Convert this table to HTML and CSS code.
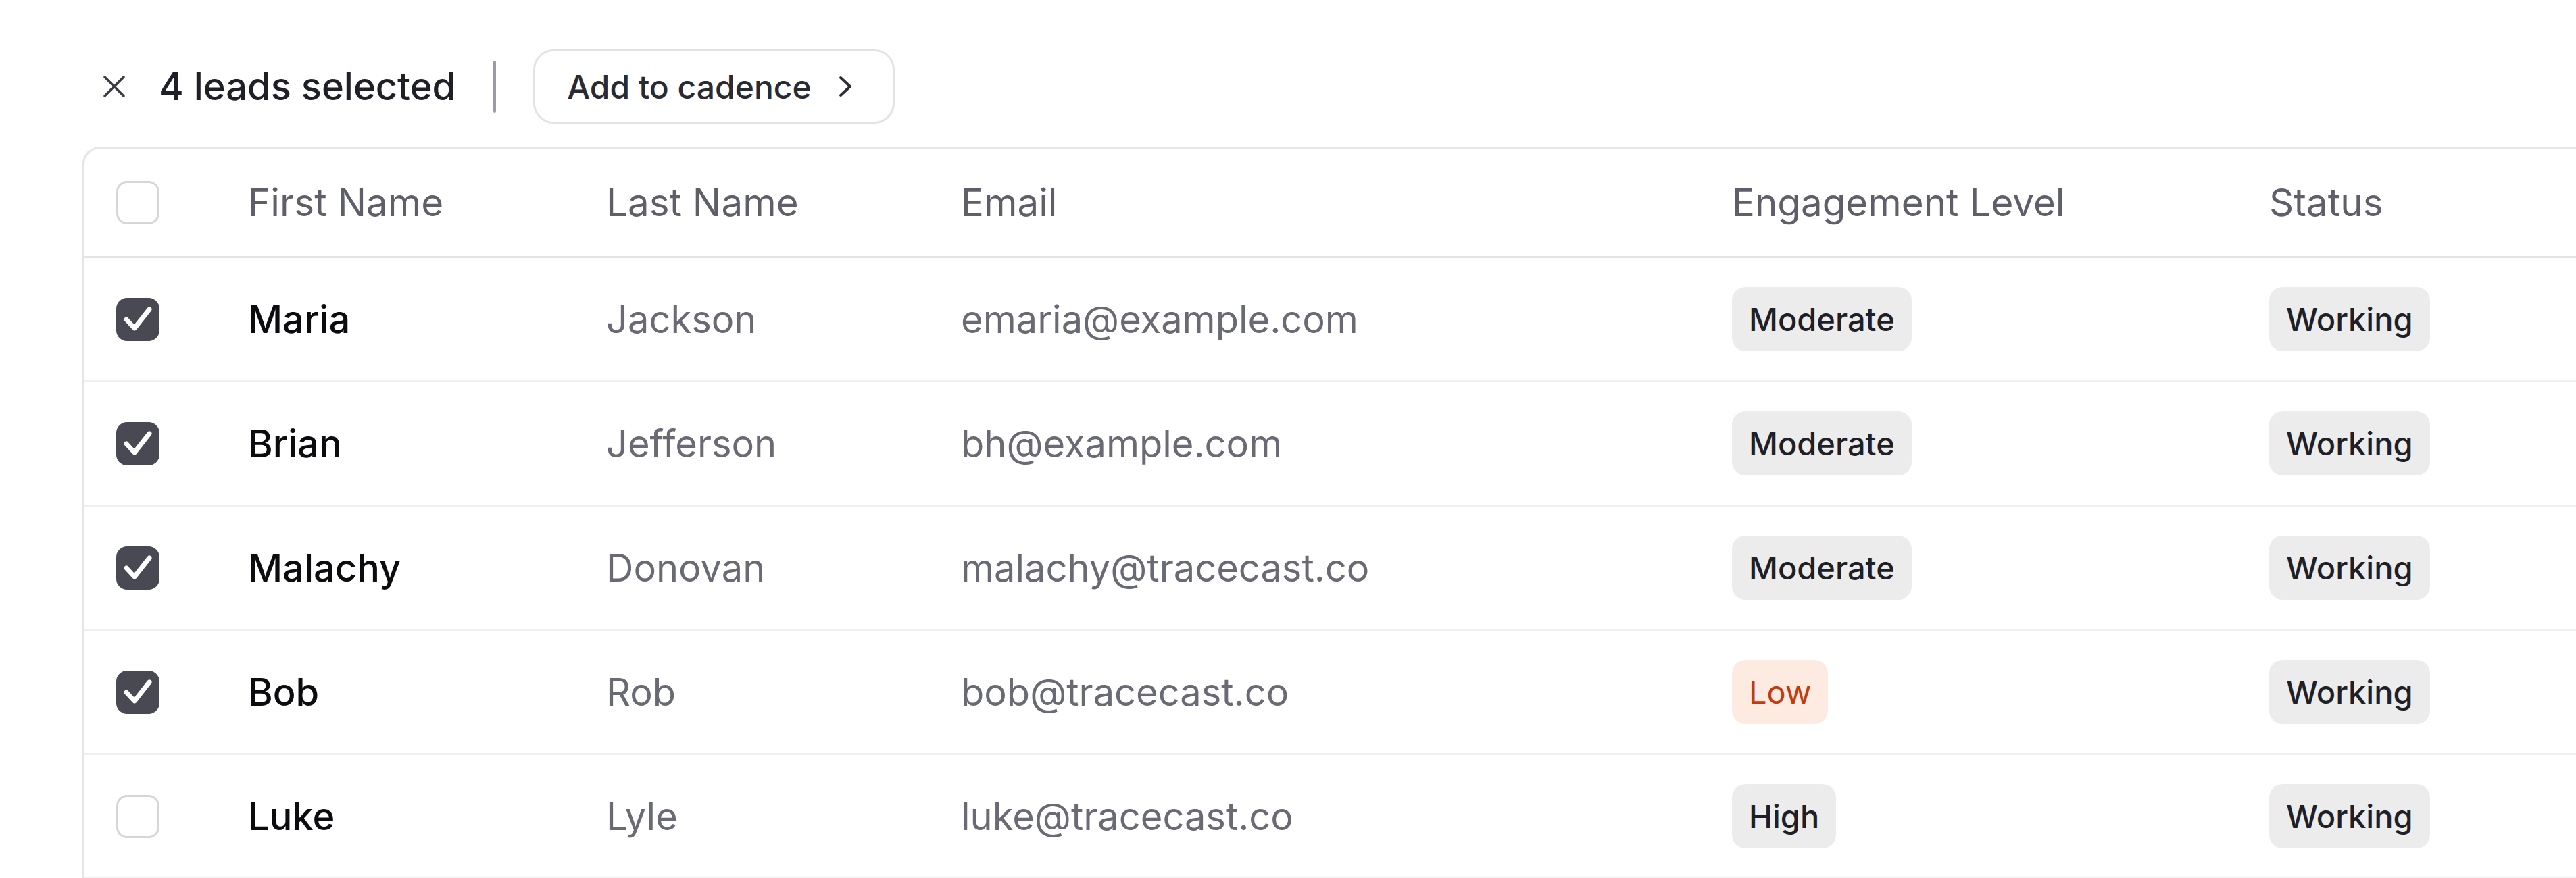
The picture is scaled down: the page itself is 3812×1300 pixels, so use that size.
FILE: index.html
```html
<!DOCTYPE html>
<html>
<head>
<meta charset="utf-8">
<link rel="stylesheet" href="styles.css">
</head>
<body>
<div class="page">
  <div class="toolbar">
    <span class="close-icon">
      <svg width="34" height="34" viewBox="0 0 34 34"><path d="M3 3 L31 31 M31 3 L3 31" stroke="#3b3b44" stroke-width="3.6" stroke-linecap="round" fill="none"/></svg>
    </span>
    <span class="selected-text">4 leads selected</span>
    <span class="divider"></span>
    <button class="cadence-btn">
      <span>Add to cadence</span>
      <svg class="chev" width="24" height="32" viewBox="0 0 24 32"><path d="M5 3 L19 16 L5 29" stroke="#2c2c35" stroke-width="4" stroke-linecap="round" stroke-linejoin="round" fill="none"/></svg>
    </button>
  </div>

  <div class="card">
    <div class="row head">
      <div class="cell"><span class="cb"></span></div>
      <div class="cell">First Name</div>
      <div class="cell">Last Name</div>
      <div class="cell">Email</div>
      <div class="cell">Engagement Level</div>
      <div class="cell">Status</div>
    </div>

    <div class="row">
      <div class="cell"><span class="cb checked"><svg width="64" height="64" viewBox="0 0 64 64"><path d="M15 32 L27 45 L49 17" stroke="#fff" stroke-width="7" stroke-linecap="round" stroke-linejoin="round" fill="none"/></svg></span></div>
      <div class="cell first">Maria</div>
      <div class="cell muted">Jackson</div>
      <div class="cell muted">emaria@example.com</div>
      <div class="cell"><span class="badge">Moderate</span></div>
      <div class="cell"><span class="badge">Working</span></div>
    </div>

    <div class="row">
      <div class="cell"><span class="cb checked"><svg width="64" height="64" viewBox="0 0 64 64"><path d="M15 32 L27 45 L49 17" stroke="#fff" stroke-width="7" stroke-linecap="round" stroke-linejoin="round" fill="none"/></svg></span></div>
      <div class="cell first">Brian</div>
      <div class="cell muted">Jefferson</div>
      <div class="cell muted">bh@example.com</div>
      <div class="cell"><span class="badge">Moderate</span></div>
      <div class="cell"><span class="badge">Working</span></div>
    </div>

    <div class="row">
      <div class="cell"><span class="cb checked"><svg width="64" height="64" viewBox="0 0 64 64"><path d="M15 32 L27 45 L49 17" stroke="#fff" stroke-width="7" stroke-linecap="round" stroke-linejoin="round" fill="none"/></svg></span></div>
      <div class="cell first">Malachy</div>
      <div class="cell muted">Donovan</div>
      <div class="cell muted">malachy@tracecast.co</div>
      <div class="cell"><span class="badge">Moderate</span></div>
      <div class="cell"><span class="badge">Working</span></div>
    </div>

    <div class="row">
      <div class="cell"><span class="cb checked"><svg width="64" height="64" viewBox="0 0 64 64"><path d="M15 32 L27 45 L49 17" stroke="#fff" stroke-width="7" stroke-linecap="round" stroke-linejoin="round" fill="none"/></svg></span></div>
      <div class="cell first">Bob</div>
      <div class="cell muted">Rob</div>
      <div class="cell muted">bob@tracecast.co</div>
      <div class="cell"><span class="badge low">Low</span></div>
      <div class="cell"><span class="badge">Working</span></div>
    </div>

    <div class="row">
      <div class="cell"><span class="cb"></span></div>
      <div class="cell first">Luke</div>
      <div class="cell muted">Lyle</div>
      <div class="cell muted">luke@tracecast.co</div>
      <div class="cell"><span class="badge">High</span></div>
      <div class="cell"><span class="badge">Working</span></div>
    </div>
  </div>
</div>
</body>
</html>
```

FILE: styles.css
```css
* { box-sizing: border-box; }

html, body {
  margin: 0;
  padding: 0;
  background: #ffffff;
  overflow: hidden;
}

body {
  font-family: Inter, "Noto Sans", "Liberation Sans", sans-serif;
  color: #1e1e26;
}

.page {
  padding: 73px 0 0 122px;
  width: 3900px;
}

.toolbar {
  display: flex;
  align-items: center;
  height: 110px;
}

.close-icon {
  display: flex;
  width: 34px;
  height: 34px;
  margin-left: 30px;
}

.selected-text {
  margin-left: 49px;
  font-size: 56px;
  font-weight: 500;
  color: #1f1f27;
}

.divider {
  width: 4px;
  height: 77px;
  background: #9c9ca5;
  border-radius: 2px;
  margin-left: 56px;
}

.cadence-btn {
  margin-left: 55px;
  height: 110px;
  width: 535px;
  border: 3px solid #e3e3e5;
  border-radius: 30px;
  background: #fff;
  display: flex;
  align-items: center;
  padding: 0 0 0 47px;
  font-family: inherit;
  font-size: 48px;
  font-weight: 500;
  color: #2a2a33;
  cursor: pointer;
}

.cadence-btn .chev {
  margin-left: 38px;
}

.card {
  margin-top: 34px;
  width: 3760px;
  border: 3px solid #e5e5e7;
  border-right: none;
  border-radius: 26px 0 0 0;
  padding-left: 47px;
  background: #fff;
}

.row {
  display: grid;
  grid-template-columns: 195px 530px 525px 1141px 795px 1fr;
  align-items: center;
  height: 184px;
  border-bottom: 3px solid #f0f0f1;
  margin-left: -47px;
  padding-left: 47px;
}

.row.head {
  height: 162px;
  border-bottom-color: #e4e4e6;
}

.cell {
  font-size: 56px;
  white-space: nowrap;
  display: flex;
  align-items: center;
}

.head .cell {
  color: #5f5f6a;
  font-weight: 400;
  font-size: 56.5px;
}

.first {
  color: #0b0b10;
  font-weight: 500;
}

.muted {
  color: #6a6a75;
  font-weight: 400;
}

.cb {
  width: 64px;
  height: 64px;
  border-radius: 16px;
  border: 3px solid #d6d6d9;
  background: #fff;
  display: flex;
  align-items: center;
  justify-content: center;
}

.cb.checked {
  border: none;
  background: #494954;
}

.badge {
  display: inline-flex;
  align-items: center;
  height: 95px;
  padding: 0 25px;
  border-radius: 20px;
  background: #ececec;
  color: #1f1f28;
  font-size: 47px;
  font-weight: 500;
}

.badge.low {
  background: #fdeae1;
  color: #c23a0e;
  font-weight: 400;
}
```
